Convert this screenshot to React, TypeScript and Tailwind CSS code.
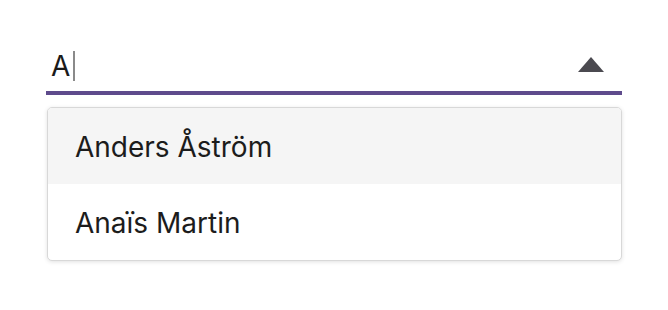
import React from "react";

export default function App() {
  return (
    <div className="w-[668px] h-[310px] bg-white" style={{ fontFamily: "Inter, 'Noto Sans', sans-serif" }}>
      <div className="pt-[40px] pl-[46px] w-[622px]">
        <div className="flex items-center h-[51px] pl-[5px] pr-[18px]">
          <span className="text-[28px] leading-none text-[#1a1a1a]">A</span>
          <span className="ml-[3px] w-[2px] h-[30px] bg-[#8a8a8a]" />
          <div className="flex-1" />
          <svg width="26" height="15" viewBox="0 0 26 15" className="mt-[-3px]">
            <polygon points="13,0 26,15 0,15" fill="#4b4a50" />
          </svg>
        </div>
        <div className="h-[4px] bg-[#5e4b8c]" />
        <div className="mt-[12px] ml-[1px] rounded-[5px] border border-[#d8d8d8] shadow-[0_1px_4px_rgba(0,0,0,0.12)] overflow-hidden bg-white">
          <div className="h-[76px] flex items-center pl-[27px] pt-[2px] bg-[#f5f5f5] text-[28px] text-[#1c1c1c]">Anders Åström</div>
          <div className="h-[76px] flex items-center pl-[27px] pt-[2px] text-[28px] text-[#1c1c1c]">Anaïs Martin</div>
        </div>
      </div>
    </div>
  );
}
